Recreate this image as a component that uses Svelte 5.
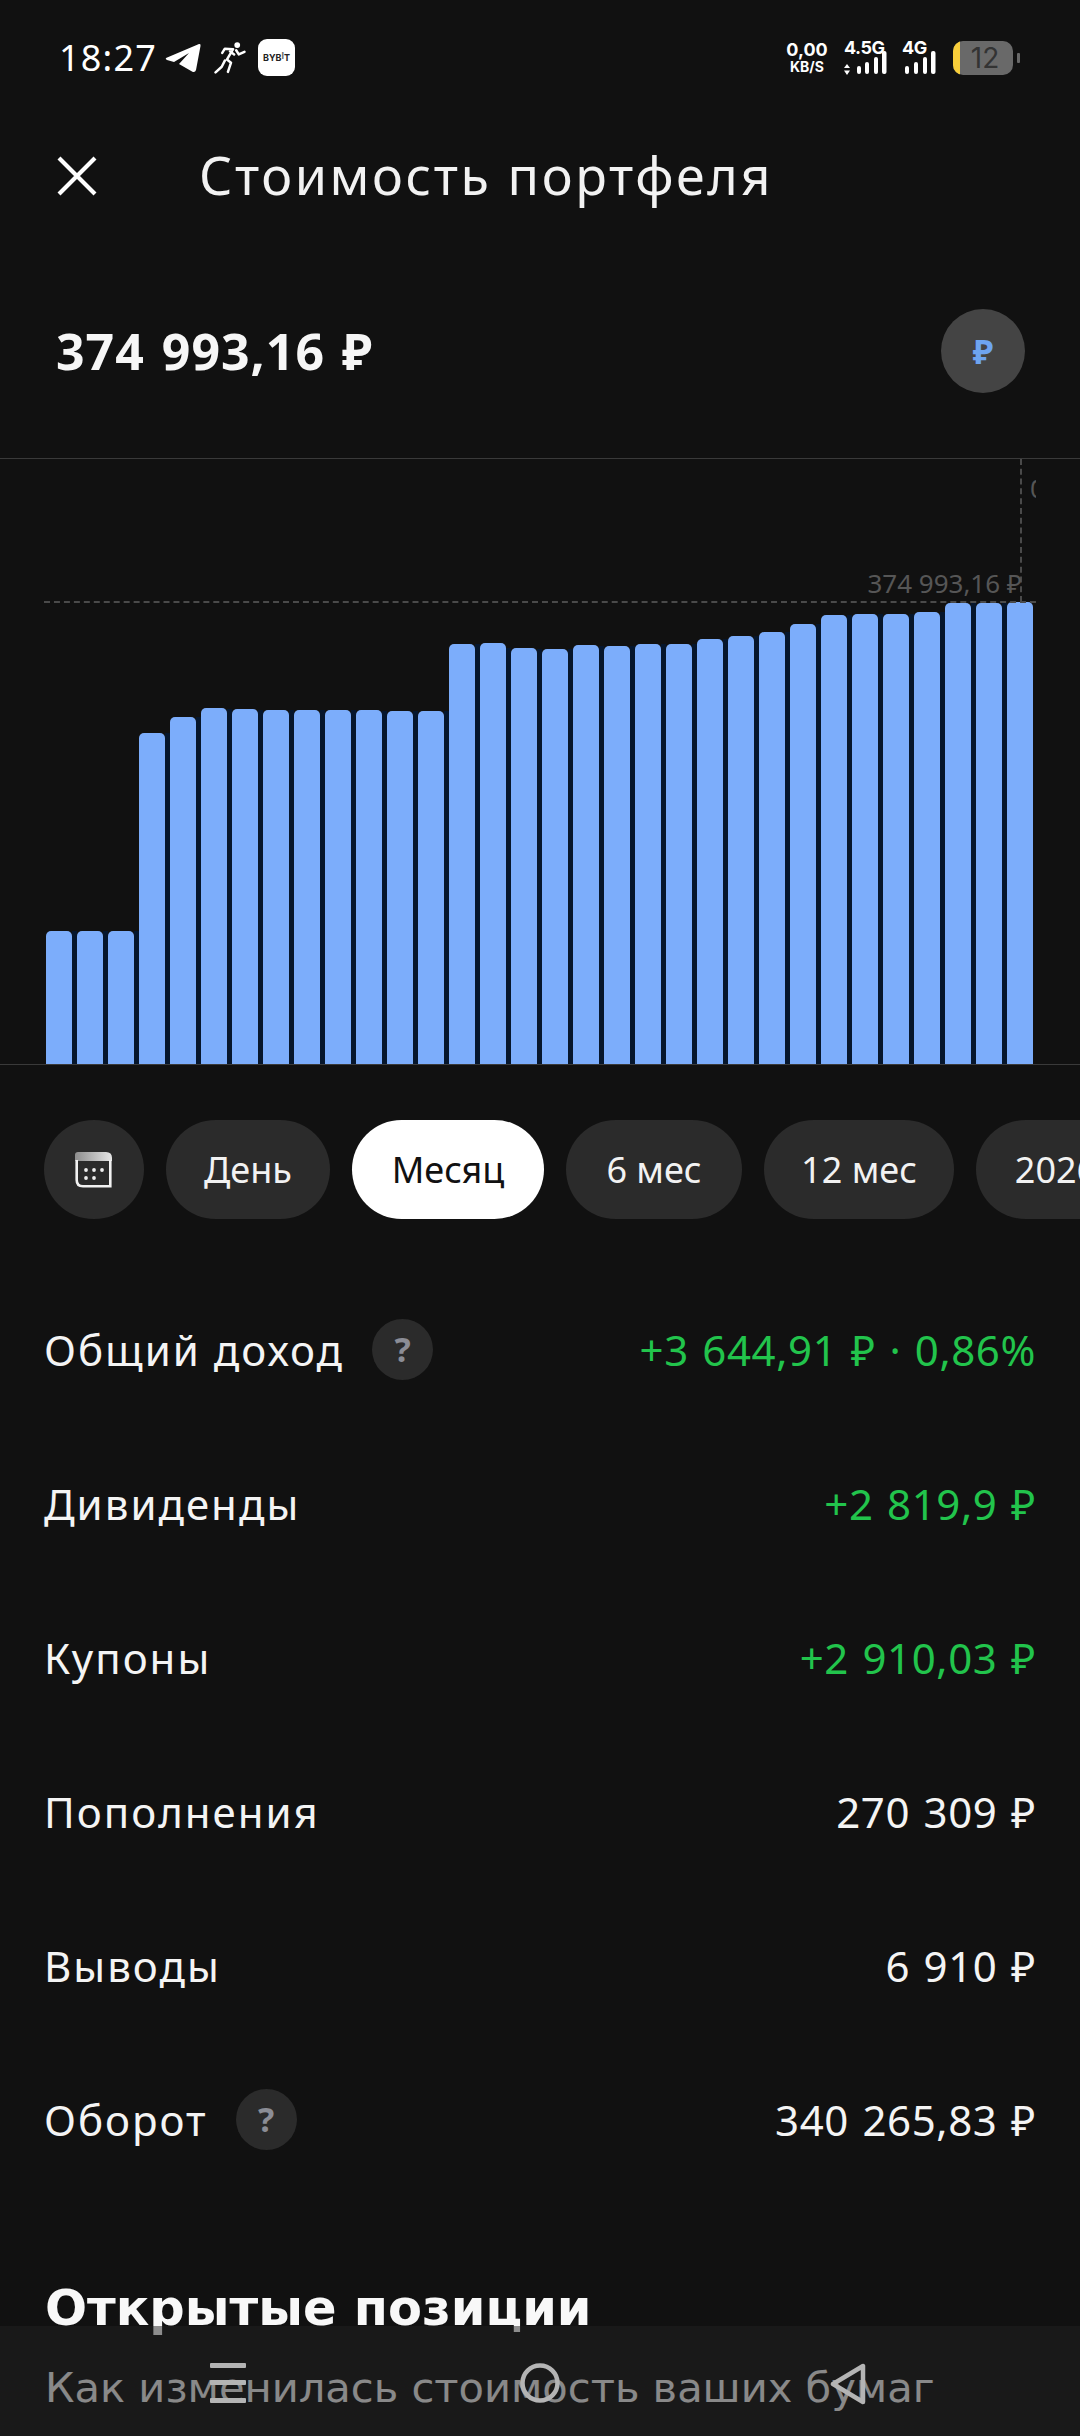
<script>
  // bar tops measured from the chart baseline
  const tops = [931, 931, 931, 733, 717, 708, 709, 710, 710, 710, 710, 711, 711, 644, 643, 648,
    649, 645, 646, 644, 644, 639, 636, 632, 624, 615, 614, 614, 612, 603, 603, 602];
  const baseline = 1064;
  const bars = tops.map((t, i) => {
    const h = baseline - t;
    const next = i < tops.length - 1 ? baseline - tops[i + 1] : 0;
    return { h, gap: Math.min(h, next) };
  });

  const periods = [
    { label: 'День', w: 164 },
    { label: 'Месяц', w: 192 },
    { label: '6 мес', w: 176 },
    { label: '12 мес', w: 190 },
    { label: '2026', w: 160 }
  ];

  const rows = [
    { label: 'Общий доход', value: '+3 644,91 ₽ · 0,86%', green: true, help: true },
    { label: 'Дивиденды', value: '+2 819,9 ₽', green: true },
    { label: 'Купоны', value: '+2 910,03 ₽', green: true },
    { label: 'Пополнения', value: '270 309 ₽' },
    { label: 'Выводы', value: '6 910 ₽' },
    { label: 'Оборот', value: '340 265,83 ₽', help: true }
  ];
</script>

<div class="page">
  <div class="status">
    <span class="time">18:27</span>
    <svg class="tg" width="36" height="30" viewBox="0 0 36 30">
      <path d="M1 15 L34 1 Q36 0.5 35.5 3 L31 27 Q30 30 27 28.5 L14 21 L24 10 L9 19 L2 17 Q0 16 1 15 Z" fill="#fff" />
    </svg>
    <svg class="runner" width="34" height="32" viewBox="0 0 32 31" fill="none" stroke="#fff" stroke-width="2.4" stroke-linejoin="round" stroke-linecap="round">
      <circle cx="23" cy="3" r="2.8" fill="#fff" stroke="none" />
      <path d="M19 7 L11 6.5 L8.5 10.5 M19 7 L13 17 L17 20 L14 29 M22 8 L24.5 12 L30 9.5 M16 9 L20 12 M11 18 L8 24 L2 29.5" />
    </svg>
    <div class="bybit"><span>BYB<i>I</i>T</span></div>

    <div class="status-right">
      <div class="speed"><b>0,00</b><b class="unit">KB/S</b></div>
      <div class="net net-a">
        <b>4.5G</b>
        <svg width="44" height="24" viewBox="0 0 44 24">
          <path d="M3 13 L6 17 H0 Z M3 24 L6 19.5 H0 Z" fill="#fff" />
          <rect x="13" y="15" width="4" height="8" rx="2" fill="#fff" />
          <rect x="21" y="11" width="4" height="12" rx="2" fill="#fff" />
          <rect x="30" y="6" width="4" height="17" rx="2" fill="#fff" />
          <rect x="38" y="0" width="4.5" height="23" rx="2" fill="#fff" />
        </svg>
      </div>
      <div class="net net-b">
        <b>4G</b>
        <svg width="32" height="24" viewBox="0 0 32 24">
          <rect x="0" y="15" width="4" height="8" rx="2" fill="#fff" />
          <rect x="9" y="11" width="4" height="12" rx="2" fill="#fff" />
          <rect x="18" y="6" width="4" height="17" rx="2" fill="#fff" />
          <rect x="26" y="0" width="4.5" height="23" rx="2" fill="#fff" />
        </svg>
      </div>
      <div class="battery">
        <div class="level"></div>
        <span>12</span>
      </div>
      <div class="nub"></div>
    </div>
  </div>

  <div class="header">
    <svg width="40" height="40" viewBox="0 0 40 40" stroke="#fff" stroke-width="4.2">
      <path d="M2 2 L38 38 M38 2 L2 38" />
    </svg>
    <div class="title">Стоимость портфеля</div>
  </div>

  <div class="balance">
    <div class="amount">374 993,16 ₽</div>
    <div class="currency">₽</div>
  </div>

  <div class="chart">
    <div class="bars">
      {#each bars as bar, i}
        <div class="bar" style="height: {bar.h}px"></div>
        {#if i < bars.length - 1}
          <div class="bar-gap" style="height: {bar.gap}px"></div>
        {/if}
      {/each}
    </div>
    <div class="dash-h"></div>
    <div class="dash-v"></div>
    <div class="last">374 993,16 ₽</div>
    <div class="cut"><span>0</span></div>
  </div>

  <div class="periods">
    <div class="pill cal">
      <svg width="38" height="36" viewBox="0 0 38 36">
        <defs>
          <linearGradient id="calTop" x1="0" x2="1" y1="0" y2="0">
            <stop offset="0" stop-color="#8d8d8d" />
            <stop offset="1" stop-color="#e6e6e6" />
          </linearGradient>
        </defs>
        <path d="M3 0 H31 Q37 0 37 6 V9 H0 V3 Q0 0 3 0 Z" fill="url(#calTop)" />
        <path d="M1.7 8 V28 Q1.7 34.3 8 34.3 H35.3 V8" fill="none" stroke="#f2f2f2" stroke-width="2.6" />
        <circle cx="11" cy="18" r="1.9" fill="#eee" />
        <circle cx="19" cy="18" r="1.9" fill="#eee" />
        <circle cx="27" cy="18" r="1.9" fill="#eee" />
        <circle cx="11" cy="26" r="1.9" fill="#eee" />
        <circle cx="19" cy="26" r="1.9" fill="#eee" />
      </svg>
    </div>
    {#each periods as p}
      <div class="pill" class:active={p.label === 'Месяц'} style="width: {p.w}px">{p.label}</div>
    {/each}
  </div>

  <div class="rows">
    {#each rows as row}
      <div class="row">
        <div class="label">
          <span class="label-text">{row.label}</span>
          {#if row.help}
            <span class="help">?</span>
          {/if}
        </div>
        <div class="value" class:green={row.green}>{row.value}</div>
      </div>
    {/each}
  </div>

  <div class="section">
    <h2>Открытые позиции</h2>
    <p>Как изменилась стоимость ваших бумаг</p>
  </div>

  <div class="navbar">
    <svg width="36" height="40" viewBox="0 0 36 40" fill="#b4b4b4">
      <rect x="0" y="0" width="36" height="5" rx="1" />
      <rect x="0" y="17" width="36" height="5" rx="1" />
      <rect x="0" y="35" width="36" height="5" rx="1" />
    </svg>
    <svg width="40" height="40" viewBox="0 0 40 40" fill="none" stroke="#b4b4b4" stroke-width="4.5">
      <circle cx="20" cy="20" r="17.5" />
    </svg>
    <svg width="36" height="42" viewBox="0 0 36 42" fill="none" stroke="#b4b4b4" stroke-width="4.5" stroke-linejoin="round">
      <path d="M33 3 V39 L3 21 Z" />
    </svg>
  </div>
</div>

<style>
  :global(body) {
    margin: 0;
    background: #111111;
  }

  .page {
    position: relative;
    width: 1080px;
    height: 2436px;
    overflow: hidden;
    background: #111111;
    color: #fff;
    font-family: "Noto Sans", "DejaVu Sans", sans-serif;
  }

  .status {
    height: 115px;
    display: flex;
    align-items: center;
    padding-left: 59px;
    box-sizing: border-box;
  }

  .time {
    font-size: 36px;
    letter-spacing: 1.2px;
    width: 106px;
  }

  .tg {
    margin-right: 12px;
  }

  .runner {
    margin-right: 11px;
  }

  .bybit {
    width: 37px;
    height: 37px;
    border-radius: 9px;
    background: #fff;
    color: #222;
    display: flex;
    align-items: center;
    justify-content: center;
    font-size: 9px;
    font-weight: 700;
    font-family: "Inter", sans-serif;
  }

  .bybit i {
    font-style: normal;
    color: #666;
    position: relative;
    top: -2px;
  }

  .status-right {
    margin-left: auto;
    margin-right: 60px;
    display: flex;
    align-items: center;
    font-family: "Inter", "Roboto", sans-serif;
  }

  .speed {
    display: flex;
    flex-direction: column;
    align-items: center;
    line-height: 18px;
    font-size: 18px;
    width: 40px;
    margin-right: 17px;
  }

  .speed .unit {
    font-size: 14px;
    line-height: 15px;
  }

  .net {
    position: relative;
    height: 34px;
    display: flex;
    align-items: flex-end;
  }

  .net b {
    position: absolute;
    left: 0;
    top: -2px;
    font-size: 18px;
    line-height: 18px;
    letter-spacing: -0.5px;
  }

  .net-a {
    margin-right: 14px;
  }

  .net-b {
    padding-left: 3px;
    margin-right: 16px;
  }

  .battery {
    position: relative;
    width: 60px;
    height: 34px;
    border-radius: 10px;
    background: #696969;
    overflow: hidden;
    display: flex;
    align-items: center;
    justify-content: center;
    font-size: 28px;
    color: #333;
  }

  .battery span {
    position: relative;
    left: 2px;
  }

  .level {
    position: absolute;
    left: 0;
    top: 0;
    bottom: 0;
    width: 7px;
    background: #f8ce3a;
  }

  .nub {
    width: 3px;
    height: 10px;
    margin-left: 4px;
    border-radius: 1px;
    background: #696969;
  }

  .header {
    height: 122px;
    display: flex;
    align-items: center;
    padding-left: 57px;
    box-sizing: border-box;
  }

  .title {
    margin-left: 102px;
    padding-bottom: 3px;
    font-size: 52px;
    letter-spacing: 2.6px;
    color: #f2f2f2;
  }

  .balance {
    height: 221px;
    padding: 7px 0 0 56px;
    box-sizing: border-box;
    display: flex;
    align-items: center;
    justify-content: space-between;
  }

  .amount {
    font-size: 50px;
    font-weight: 700;
    letter-spacing: 1px;
    word-spacing: 3px;
    color: #f6f6f6;
  }

  .currency {
    width: 84px;
    height: 84px;
    margin-right: 55px;
    border-radius: 50%;
    background: #444;
    color: #6ea4f0;
    font-size: 34px;
    font-weight: 700;
    display: flex;
    align-items: center;
    justify-content: center;
  }

  .chart {
    position: relative;
    height: 605px;
    border-top: 1px solid #3a3a3a;
    border-bottom: 1px solid #3a3a3a;
  }

  .bars {
    position: absolute;
    left: 46px;
    bottom: 0;
    display: flex;
    align-items: flex-end;
  }

  .bar {
    width: 26px;
    background: #7cadfb;
    border-radius: 5px 5px 0 0;
  }

  .bar-gap {
    width: 5px;
    background: #06162c;
  }

  .dash-h {
    position: absolute;
    left: 44px;
    right: 44px;
    top: 142px;
    border-top: 2px dashed #4a4a4a;
  }

  .dash-v {
    position: absolute;
    left: 1020px;
    top: 0;
    height: 143px;
    border-left: 2px dashed #4a4a4a;
  }

  .last {
    position: absolute;
    right: 58px;
    top: 108px;
    font-size: 26px;
    line-height: 32px;
    color: #565656;
  }

  .cut {
    position: absolute;
    left: 1030px;
    top: 13px;
    width: 6px;
    overflow: hidden;
    font-size: 26px;
    line-height: 32px;
    color: #565656;
  }

  .periods {
    display: flex;
    gap: 22px;
    margin-top: 55px;
    padding-left: 44px;
    white-space: nowrap;
  }

  .pill {
    flex: none;
    height: 99px;
    border-radius: 50px;
    background: #2b2b2b;
    font-size: 36px;
    color: #f2f2f2;
    display: flex;
    align-items: center;
    justify-content: center;
  }

  .pill.cal {
    width: 100px;
  }

  .pill.active {
    background: #fff;
    color: #111;
  }

  .rows {
    margin-top: 53px;
  }

  .row {
    height: 154px;
    padding: 0 44px;
    display: flex;
    align-items: center;
    justify-content: space-between;
    font-size: 42px;
    color: #f4f4f4;
  }

  .label {
    display: flex;
    align-items: center;
    gap: 28px;
  }

  .label-text {
    letter-spacing: 2px;
  }

  .value {
    letter-spacing: 0.6px;
    word-spacing: 2px;
  }

  .help {
    width: 61px;
    height: 61px;
    border-radius: 50%;
    background: #2b2b2b;
    color: #8b8d96;
    font-size: 34px;
    font-weight: 700;
    display: flex;
    align-items: center;
    justify-content: center;
  }

  .green {
    color: #22c44c;
  }

  .section {
    padding: 77px 0 0 45px;
    font-family: "DejaVu Sans", sans-serif;
  }

  h2 {
    margin: 0;
    font-size: 49.5px;
    line-height: 70px;
    font-weight: 700;
    color: #f8f8f8;
  }

  p {
    margin: 10px 0 0;
    font-size: 41.6px;
    line-height: 70px;
    color: #f0f0f0;
  }

  .navbar {
    position: absolute;
    left: 0;
    right: 0;
    top: 2326px;
    bottom: 0;
    background: rgba(33, 33, 33, 0.5);
  }

  .navbar svg {
    position: absolute;
    top: 37px;
  }

  .navbar svg:nth-child(1) {
    left: 210px;
  }

  .navbar svg:nth-child(2) {
    left: 520px;
  }

  .navbar svg:nth-child(3) {
    left: 830px;
  }
</style>
